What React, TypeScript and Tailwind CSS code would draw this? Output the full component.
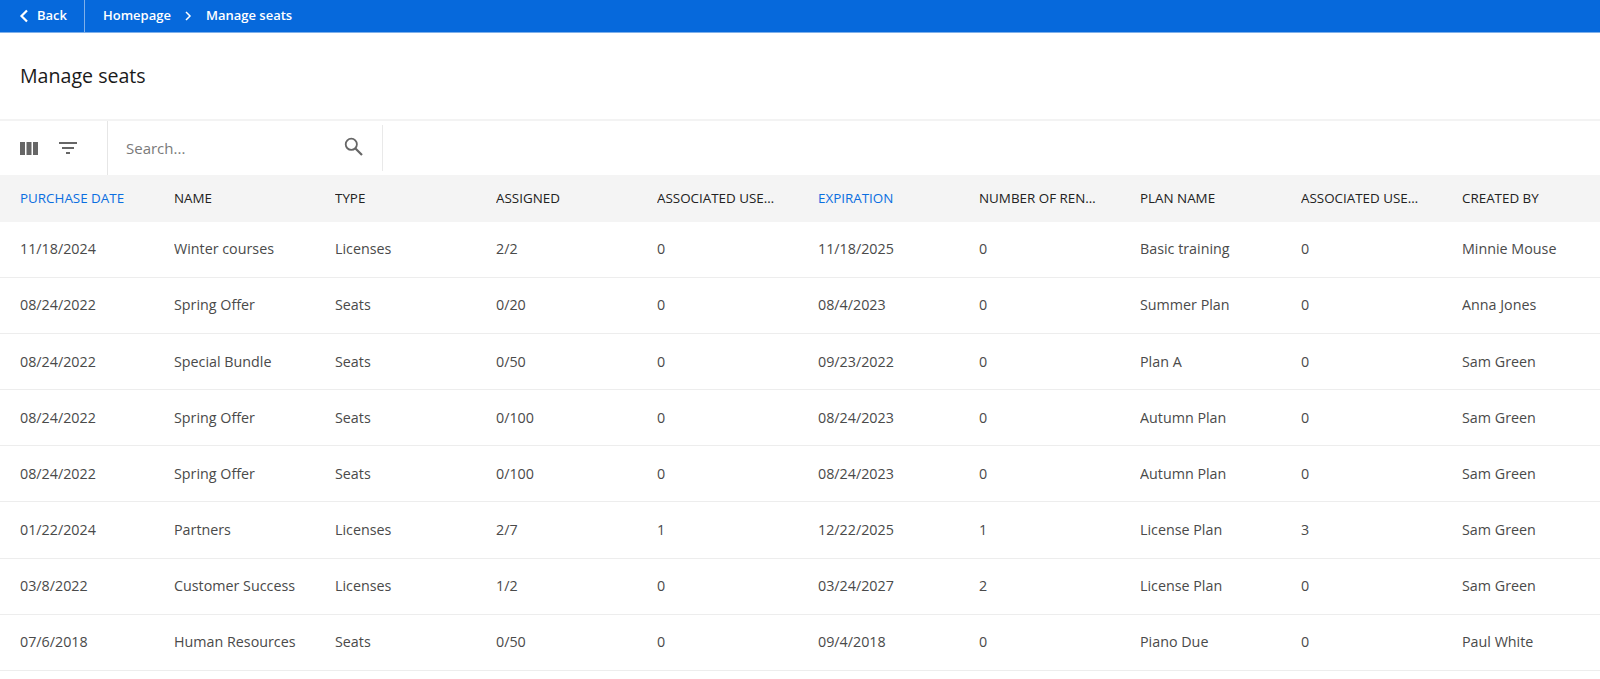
const headers: { label: string; active?: boolean }[] = [
  { label: "PURCHASE DATE", active: true },
  { label: "NAME" },
  { label: "TYPE" },
  { label: "ASSIGNED" },
  { label: "ASSOCIATED USERS" },
  { label: "EXPIRATION", active: true },
  { label: "NUMBER OF RENEWALS" },
  { label: "PLAN NAME" },
  { label: "ASSOCIATED USERS" },
  { label: "CREATED BY" },
];

const rows = [
  ["11/18/2024", "Winter courses", "Licenses", "2/2", "0", "11/18/2025", "0", "Basic training", "0", "Minnie Mouse"],
  ["08/24/2022", "Spring Offer", "Seats", "0/20", "0", "08/4/2023", "0", "Summer Plan", "0", "Anna Jones"],
  ["08/24/2022", "Special Bundle", "Seats", "0/50", "0", "09/23/2022", "0", "Plan A", "0", "Sam Green"],
  ["08/24/2022", "Spring Offer", "Seats", "0/100", "0", "08/24/2023", "0", "Autumn Plan", "0", "Sam Green"],
  ["08/24/2022", "Spring Offer", "Seats", "0/100", "0", "08/24/2023", "0", "Autumn Plan", "0", "Sam Green"],
  ["01/22/2024", "Partners", "Licenses", "2/7", "1", "12/22/2025", "1", "License Plan", "3", "Sam Green"],
  ["03/8/2022", "Customer Success", "Licenses", "1/2", "0", "03/24/2027", "2", "License Plan", "0", "Sam Green"],
  ["07/6/2018", "Human Resources", "Seats", "0/50", "0", "09/4/2018", "0", "Piano Due", "0", "Paul White"],
];

const grid = "grid grid-cols-[154px_repeat(9,161px)] pl-5";

export default function App() {
  return (
    <div className="h-[679px] w-[1600px] overflow-hidden bg-white font-['Open_Sans',sans-serif]">
      <div className="flex h-[33px] items-center border-b border-[#7fb0ea] bg-[#0669dc] text-[13px] font-semibold text-white">
        <div className="flex h-full w-[85px] items-center border-r border-[#7fb0ea] pl-[19px]">
          <svg width="10" height="14" viewBox="0 0 10 14" fill="none" stroke="white" strokeWidth="2.2">
            <path d="M8 1.5 2.5 7 8 12.5" />
          </svg>
          <span className="ml-2">Back</span>
        </div>
        <span className="ml-[18px]">Homepage</span>
        <svg className="ml-[14px]" width="7" height="10" viewBox="0 0 7 10" fill="none" stroke="white" strokeWidth="1.5">
          <path d="M1 1l4 4-4 4" />
        </svg>
        <span className="ml-[14px]">Manage seats</span>
      </div>

      <div className="flex h-[88px] items-center border-b-2 border-[#f3f3f3] pl-5 text-[19.6px] font-medium leading-none text-[#1a1a1a]">
        <span>Manage seats</span>
      </div>

      <div className="flex h-[54px] items-center">
        <div className="flex h-full w-[108px] items-center border-r border-[#e6e6e6] pl-5">
          <svg width="18" height="13" viewBox="0 0 18 13" fill="#666666">
            <rect x="0" y="0" width="5" height="13" />
            <rect x="6.5" y="0" width="5" height="13" />
            <rect x="13" y="0" width="5" height="13" />
          </svg>
          <svg className="ml-[21px]" width="18" height="12" viewBox="0 0 18 12" fill="#666666">
            <rect x="0" y="0" width="18" height="2" />
            <rect x="3" y="5" width="12" height="2" />
            <rect x="7" y="10" width="4" height="2" />
          </svg>
        </div>
        <div className="flex h-[46px] w-[275px] items-center justify-between border-r border-[#e9e9e9] pl-[18px] pr-[19px]">
          <span className="text-[15px] text-[#7a7a7a]">Search...</span>
          <svg width="19" height="19" viewBox="0 0 19 19" fill="none" stroke="#666666" strokeWidth="1.8" className="-mt-[3px]">
            <circle cx="7.3" cy="7.3" r="5.6" />
            <path d="M11.5 11.5 18 18" strokeWidth="2.2" />
          </svg>
        </div>
      </div>

      <div className={`${grid} h-[47px] items-center bg-[#f4f4f4] text-[13.4px] font-medium`}>
        {headers.map((h, i) => (
          <div
            key={i}
            className={`truncate ${i === 0 ? "" : "pr-[43px]"} ${h.active ? "text-[#0a6ee0]" : "text-[#222222]"}`}
          >
            {h.label}
          </div>
        ))}
      </div>

      {rows.map((row, r) => (
        <div key={r} className={`${grid} h-[56.1px] items-center border-b border-[#ededed] pb-px text-[14.3px] text-[#4a4a4a]`}>
          {row.map((cell, c) => (
            <div key={c} className="truncate">
              {cell}
            </div>
          ))}
        </div>
      ))}
    </div>
  );
}
